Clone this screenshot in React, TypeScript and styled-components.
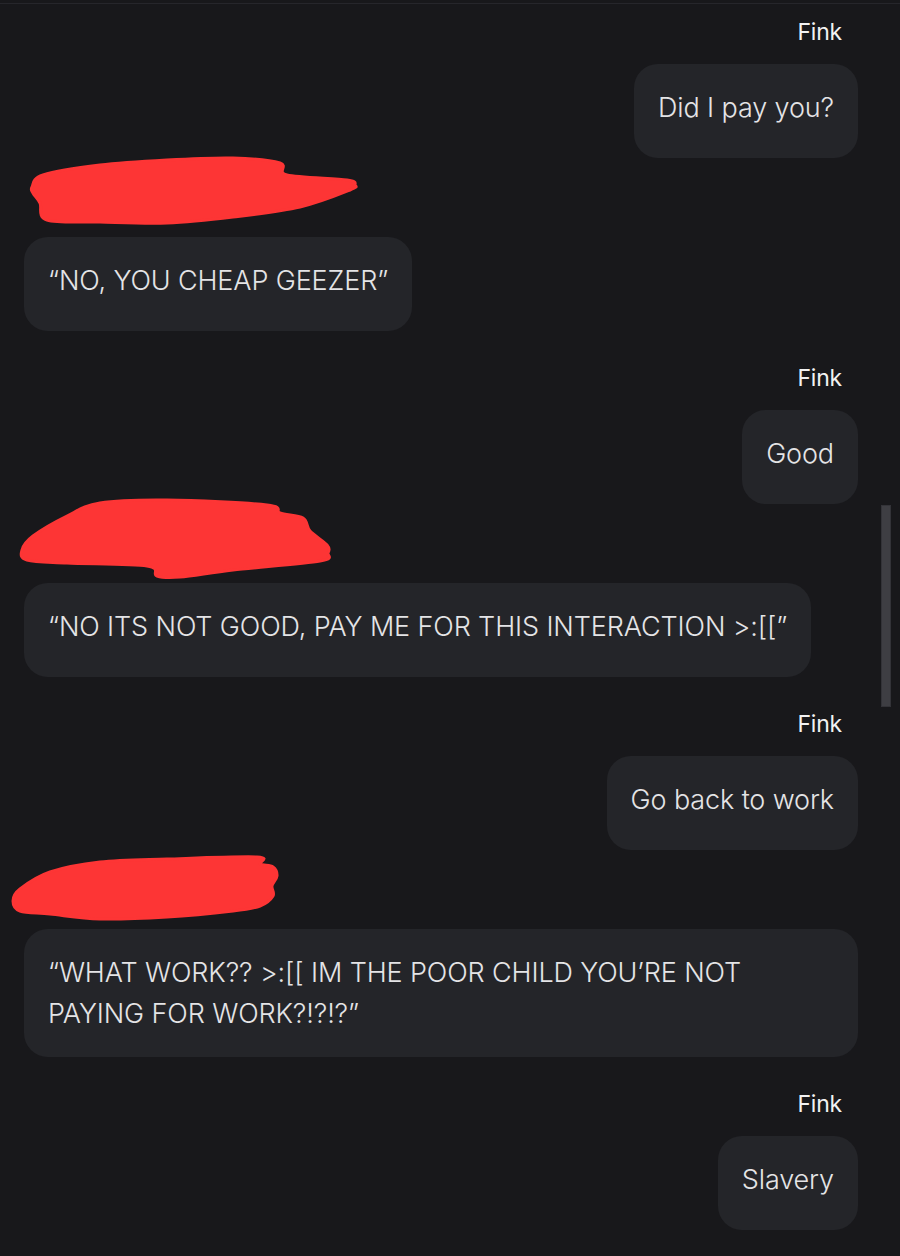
import styled, { createGlobalStyle } from 'styled-components';

const GlobalStyle = createGlobalStyle`
  html, body {
    margin: 0;
    padding: 0;
    background: #18181b;
  }
  * {
    box-sizing: border-box;
  }
`;

const Screen = styled.div`
  position: relative;
  width: 900px;
  height: 1256px;
  overflow: hidden;
  padding-top: 3px;
  background: #18181b;
  font-family: Inter, 'Noto Sans', sans-serif;
`;

const Thread = styled.div`
  display: flex;
  flex-direction: column;
  gap: 33px;
  padding: 14px 42px 0 24px;
  border-top: 1px solid #26262b;
`;

const Group = styled.div<{ $mine?: boolean }>`
  display: flex;
  flex-direction: column;
  align-items: ${({ $mine }) => ($mine ? 'flex-end' : 'flex-start')};
  gap: 18px;
`;

const Name = styled.div`
  position: relative;
  height: 28px;
  padding-right: 16px;
  font-size: 23px;
  line-height: 28px;
  color: #f2f2f2;
  letter-spacing: -0.2px;
`;

const Redaction = styled.svg<{ $x: number; $y: number }>`
  position: absolute;
  left: ${({ $x }) => $x}px;
  top: ${({ $y }) => $y}px;
  overflow: visible;
`;

const Bubble = styled.div`
  min-height: 94px;
  max-width: 834px;
  padding: 23px 24px;
  border-radius: 24px;
  background: #242529;
  color: #e4e4e6;
  font-size: 27px;
  font-weight: 300;
  line-height: 41px;
  letter-spacing: -0.12px;
`;

const ScrollThumb = styled.div`
  position: absolute;
  left: 881px;
  top: 505px;
  width: 10px;
  height: 202px;
  background: #3e3e43;
  border: 1px solid #333338;
`;

type Blob = { w: number; h: number; x: number; y: number; points: number[][] };

const blobs: Blob[] = [
  {
    w: 326,
    h: 66,
    x: 6,
    y: -34,
    points: [
      [2, 30], [13, 18], [70, 8], [137, 3], [203, 1], [250, 6], [257, 18], [317, 23],
      [325, 28], [320, 33], [270, 50], [203, 60], [137, 66], [70, 65], [17, 63], [10, 46], [3, 36]
    ]
  },
  {
    w: 310,
    h: 80,
    x: -4,
    y: -39,
    points: [
      [2, 52], [13, 38], [47, 18], [80, 5], [147, 2], [247, 7], [260, 15], [283, 20],
      [290, 33], [307, 47], [308, 55], [300, 63], [213, 72], [160, 79], [137, 78], [127, 68],
      [47, 65], [7, 62]
    ]
  },
  {
    w: 268,
    h: 66,
    x: -14,
    y: -29,
    points: [
      [3, 47], [10, 35], [40, 18], [90, 8], [157, 5], [247, 3], [250, 10], [263, 13],
      [267, 22], [262, 32], [263, 42], [250, 52], [223, 57], [157, 63], [90, 65], [40, 60], [10, 57]
    ]
  }
];

// closed catmull-rom curve through the hand-picked points
const smoothPath = (pts: number[][]) => {
  const n = pts.length;
  let d = `M${pts[0][0]},${pts[0][1]}`;
  for (let i = 0; i < n; i++) {
    const p0 = pts[(i - 1 + n) % n];
    const p1 = pts[i];
    const p2 = pts[(i + 1) % n];
    const p3 = pts[(i + 2) % n];
    const c1x = p1[0] + (p2[0] - p0[0]) / 6;
    const c1y = p1[1] + (p2[1] - p0[1]) / 6;
    const c2x = p2[0] - (p3[0] - p1[0]) / 6;
    const c2y = p2[1] - (p3[1] - p1[1]) / 6;
    d += ` C${c1x.toFixed(1)},${c1y.toFixed(1)} ${c2x.toFixed(1)},${c2y.toFixed(1)} ${p2[0]},${p2[1]}`;
  }
  return d + 'Z';
};

type Message = { mine: boolean; text: string; blob?: number };

const messages: Message[] = [
  { mine: true, text: 'Did I pay you?' },
  { mine: false, text: '“NO, YOU CHEAP GEEZER”', blob: 0 },
  { mine: true, text: 'Good' },
  { mine: false, text: '“NO ITS NOT GOOD, PAY ME FOR THIS INTERACTION >:[[”', blob: 1 },
  { mine: true, text: 'Go back to work' },
  {
    mine: false,
    text: '“WHAT WORK?? >:[[ IM THE POOR CHILD YOU’RE NOT PAYING FOR WORK?!?!?”',
    blob: 2
  },
  { mine: true, text: 'Slavery' }
];

const RedBlob = ({ blob }: { blob: Blob }) => (
  <Redaction $x={blob.x} $y={blob.y} width={blob.w} height={blob.h} viewBox={`0 0 ${blob.w} ${blob.h}`}>
    <path d={smoothPath(blob.points)} fill="#fd3535" stroke="#fd3535" strokeWidth={3} strokeLinejoin="round" />
  </Redaction>
);

const App = () => {
  return (
    <Screen>
      <GlobalStyle />
      <Thread>
        {messages.map((m, i) => (
          <Group key={i} $mine={m.mine}>
            <Name>
              {m.mine ? 'Fink' : ''}
              {m.blob !== undefined && <RedBlob blob={blobs[m.blob]} />}
            </Name>
            <Bubble>{m.text}</Bubble>
          </Group>
        ))}
      </Thread>
      <ScrollThumb />
    </Screen>
  );
};

export default App;
